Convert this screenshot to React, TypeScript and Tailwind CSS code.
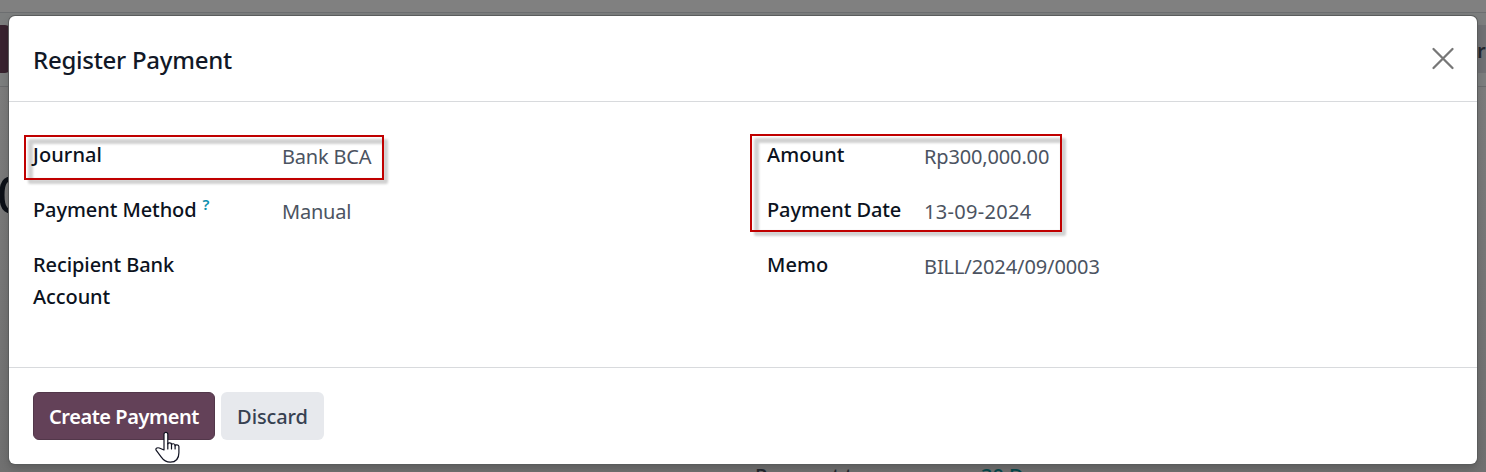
import React from "react"

function FieldLabel({ children, className = "" }: { children: React.ReactNode; className?: string }) {
  return (
    <div className={`text-[20px] leading-8 font-medium tracking-[-0.08px] text-[#0b1220] ${className}`}>{children}</div>
  )
}

function FieldValue({ children, className = "" }: { children?: React.ReactNode; className?: string }) {
  return (
    <div className={`pt-0.5 text-[20px] leading-8 text-[#4b5361] whitespace-nowrap ${className}`}>{children}</div>
  )
}

// red frame drawn over the form, with its offset shadow
function Highlight({ className }: { className: string }) {
  return (
    <div className={`absolute pointer-events-none ${className}`}>
      <div className="absolute left-1 top-1 w-full h-full border-[5px] border-black/18 blur-[1.2px] rounded-xs" />
      <div className="absolute inset-0 border-2 border-[#c00000]" />
    </div>
  )
}

function Backdrop() {
  return (
    <div className="h-full bg-[#7a7a7a] flex flex-col">
      <div className="h-[13px] shrink-0 bg-[#808080] border-b border-[#6c6e70]" />
      <div className="h-[74px] shrink-0 bg-[#7c7e7e] border-b border-[#6a6b6d] flex items-start justify-between pt-3">
        <div className="w-[11px] h-12 bg-[#38232f] rounded-r-md" />
        <div className="w-[9px] h-12 pt-1 bg-[#707174] flex items-center">
          <span className="text-[20px] font-semibold text-[#23272f]">r</span>
        </div>
      </div>
      <div className="grow relative overflow-hidden bg-linear-to-b from-[#7c7c7c] to-[#707070]">
        <span className="absolute -left-[3px] top-[74px] text-[50px] leading-[66px] font-medium text-[#0b0f16]">0</span>
        <span className="absolute left-[755px] top-[373px] text-[20px] leading-8 font-medium text-[#23272f]">
          Payment terms
        </span>
        <span className="absolute left-[981px] top-[373px] text-[20px] leading-8 font-medium text-[#06484c]">30 Days</span>
      </div>
    </div>
  )
}

function HandCursor() {
  return (
    <svg className="absolute left-[154px] top-[430px]" width="28" height="34" viewBox="0 0 28 34">
      <path
        d="M10 20V4.2a1.9 1.9 0 0 1 3.8 0V14c0-1.6 3.7-1.6 3.7.3v.5c0-1.5 3.6-1.4 3.6.5v.5c0-1.3 3.8-1.2 3.8.8v6.2c0 6-3.3 9.4-8.6 9.4-4.2 0-6.5-1.4-9-5l-5.2-7c-1-1.6.8-3 3.2-2.2L10 20Z"
        fill="#fff"
        stroke="#111322"
        strokeWidth="1.2"
        strokeLinejoin="round"
      />
      <path d="M13.8 13.5v5.5M17.5 14v5M21.1 15v4" stroke="#111322" strokeWidth="1.2" strokeLinecap="round" />
    </svg>
  )
}

export default function App() {
  return (
    <div className="relative w-[1486px] h-[472px] overflow-hidden font-['Noto_Sans',sans-serif]">
      <Backdrop />

      <div className="absolute left-[9px] top-4 w-[1468px] h-[448px] bg-white rounded-md shadow-[0_0_0_1px_#5a5c5c,0_4px_8px_rgba(0,0,0,0.2)] flex flex-col">
        <header className="h-[86px] shrink-0 border-b border-[#d8dadd] flex items-center justify-between pl-6 pr-[22px]">
          <h4 className="text-[24px] font-medium tracking-[-0.26px] text-[#111827] pt-[3px]">Register Payment</h4>
          <button aria-label="Close">
            <svg width="24" height="24" viewBox="0 0 24 24" fill="none" stroke="#777" strokeWidth="2.3" strokeLinecap="round">
              <path d="M2.5 2 21.5 21M21.5 2 2.5 21" />
            </svg>
          </button>
        </header>

        <main className="grow pt-[37px] pl-6 grid grid-cols-[734px_1fr] items-start">
          <div className="grid grid-cols-[249px_1fr] gap-y-[21px]">
            <FieldLabel className="tracking-[0.1px]">Journal</FieldLabel>
            <FieldValue className="tracking-[-0.2px]">Bank BCA</FieldValue>
            <FieldLabel>
              Payment Method<sup className="ml-1.5 text-[15px] font-semibold text-[#0b8fae]">?</sup>
            </FieldLabel>
            <FieldValue className="tracking-[-0.2px]">Manual</FieldValue>
            <FieldLabel className="w-[160px]">Recipient Bank Account</FieldLabel>
            <FieldValue />
          </div>
          <div className="grid grid-cols-[157px_1fr] gap-y-[21px]">
            <FieldLabel className="tracking-[0.1px]">Amount</FieldLabel>
            <FieldValue className="tracking-[-0.15px]">Rp300,000.00</FieldValue>
            <FieldLabel>Payment Date</FieldLabel>
            <FieldValue className="tracking-[0.3px]">13-09-2024</FieldValue>
            <FieldLabel className="tracking-[0.1px]">Memo</FieldLabel>
            <FieldValue className="tracking-[-0.1px]">BILL/2024/09/0003</FieldValue>
          </div>
        </main>

        <footer className="h-[97px] shrink-0 border-t border-[#d8dadd] flex items-start gap-1.5 pt-6 pl-6">
          <button className="w-[182px] h-12 pt-0.5 rounded-md bg-[#634158] border border-[#52374a] text-white text-[20px] font-semibold tracking-[-0.45px] whitespace-nowrap">
            Create Payment
          </button>
          <button className="w-[103px] h-12 pt-0.5 rounded-md bg-[#e7e9ed] text-[#374151] text-[20px] font-medium tracking-[-0.1px]">
            Discard
          </button>
        </footer>
      </div>

      <Highlight className="left-6 top-[135px] w-[360px] h-[45px]" />
      <Highlight className="left-[750px] top-[134px] w-[312px] h-[98px]" />
      <HandCursor />
    </div>
  )
}
